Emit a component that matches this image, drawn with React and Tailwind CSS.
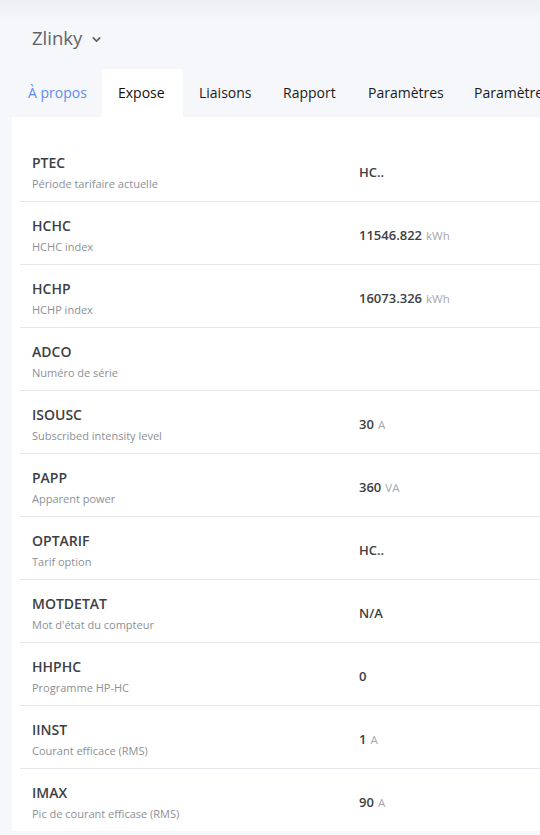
import { ChevronDown } from 'lucide-react';

const tabs = [
  { label: 'À propos', w: 'w-[90px]' },
  { label: 'Expose', w: 'w-[81px]', active: true },
  { label: 'Liaisons', w: 'w-[84px]' },
  { label: 'Rapport', w: 'w-[85px]' },
  { label: 'Paramètres', w: 'w-[106px]' },
  { label: 'Paramètres', w: 'w-[120px]' },
];

const rows = [
  { name: 'PTEC', desc: 'Période tarifaire actuelle', value: 'HC..' },
  { name: 'HCHC', desc: 'HCHC index', value: '11546.822', unit: 'kWh' },
  { name: 'HCHP', desc: 'HCHP index', value: '16073.326', unit: 'kWh' },
  { name: 'ADCO', desc: 'Numéro de série', value: '' },
  { name: 'ISOUSC', desc: 'Subscribed intensity level', value: '30', unit: 'A' },
  { name: 'PAPP', desc: 'Apparent power', value: '360', unit: 'VA' },
  { name: 'OPTARIF', desc: 'Tarif option', value: 'HC..' },
  { name: 'MOTDETAT', desc: "Mot d'état du compteur", value: 'N/A' },
  { name: 'HHPHC', desc: 'Programme HP-HC', value: '0' },
  { name: 'IINST', desc: 'Courant efficace (RMS)', value: '1', unit: 'A' },
  { name: 'IMAX', desc: 'Pic de courant efficase (RMS)', value: '90', unit: 'A' },
];

function ExposeRow({ row, first }) {
  return (
    <div className={`grid grid-cols-[327px_1fr] items-center pl-3 pt-[14px] pb-[8px] ${first ? '' : 'border-t border-[#e3e7ec]'}`}>
      <div>
        <div className="text-[14px] font-semibold leading-[20px] text-[#3c4044]">{row.name}</div>
        <div className="mt-[2px] text-[11px] leading-[18px] text-[#8c9095]">{row.desc}</div>
      </div>
      <div className="text-[13px] font-semibold text-[#3c4044]">
        {row.value}
        {row.unit && <span className="ml-1 text-[11.5px] font-normal text-[#a3a8ae]">{row.unit}</span>}
      </div>
    </div>
  );
}

export default function App() {
  return (
    <div className="h-[835px] w-[540px] overflow-hidden bg-[#f6f7fb] font-['Open_Sans',sans-serif]">
      <div className="h-5 bg-gradient-to-b from-[#eceef2] to-[#f6f7fb]" />
      <div className="flex items-center gap-2 pl-8 pt-[5px] pb-[18px]">
        <span className="text-[18.5px] leading-[26px] text-[#5f6368]">Zlinky</span>
        <ChevronDown size={13} strokeWidth={3} className="mt-0.5 text-[#5f6368]" />
      </div>
      <div className="flex w-[700px] pl-3">
        {tabs.map((t, i) => (
          <div
            key={i}
            className={`${t.w} shrink-0 rounded-t-[3px] pl-4 text-[14px] leading-[48px] ${
              t.active ? 'bg-white text-[#111]' : i === 0 ? 'text-[#5b8def]' : 'text-[#1a1a1a]'
            }`}
          >
            {t.label}
          </div>
        ))}
      </div>
      <div className="ml-3 w-[700px] bg-white pl-2 pt-[22px]">
        {rows.map((r, i) => (
          <ExposeRow key={i} row={r} first={i === 0} />
        ))}
      </div>
    </div>
  );
}
